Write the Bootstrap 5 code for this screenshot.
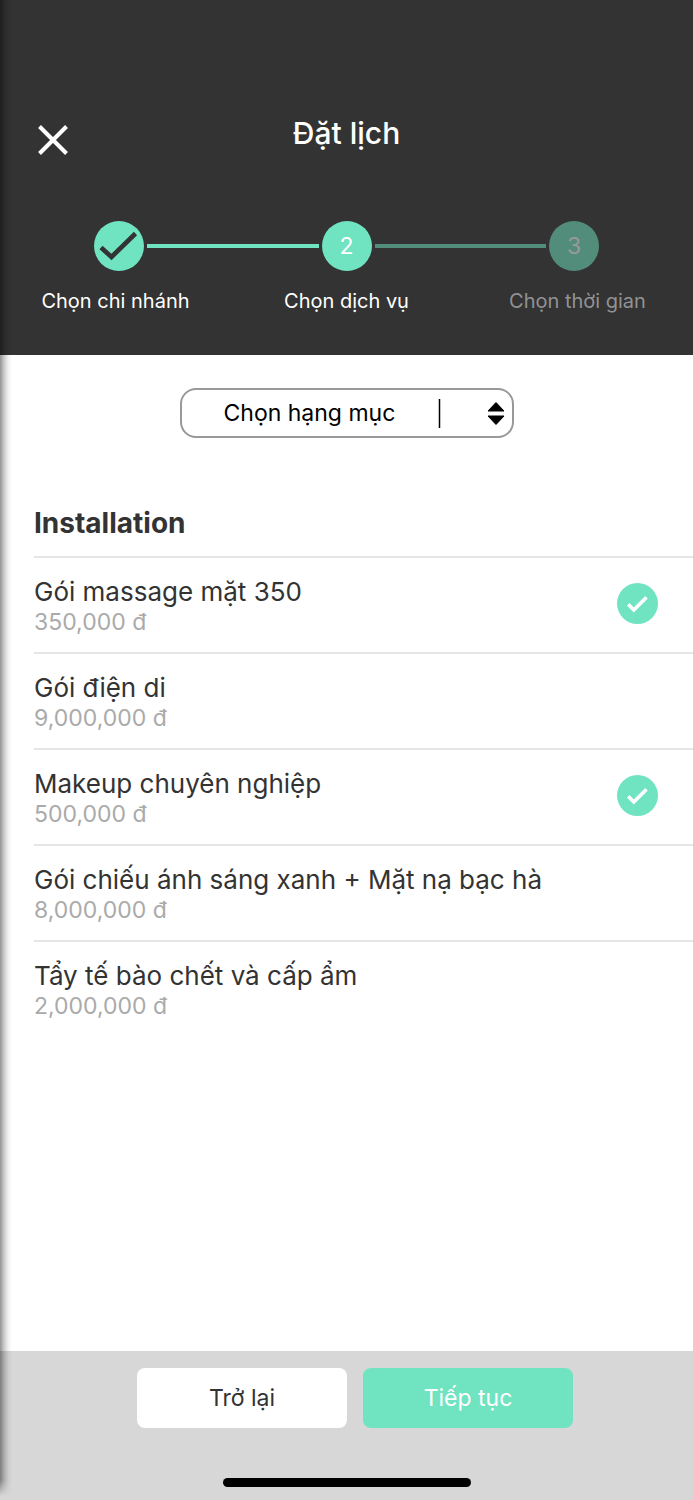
<!DOCTYPE html>
<html lang="vi">
<head>
<meta charset="utf-8">
<meta name="viewport" content="width=device-width, initial-scale=1">
<title>Đặt lịch</title>
<link href="https://cdn.jsdelivr.net/npm/bootstrap@5.3.0/dist/css/bootstrap.min.css" rel="stylesheet">
<style>
:root { --mint: #70e4c1; --ink: #333333; }
body { font-family: Inter, "Liberation Sans", sans-serif; color: var(--ink); background: #fff; }
.edge-shadow { width: 12px; top: 0; bottom: 4px; background: linear-gradient(to right, rgba(0,0,0,.42), rgba(0,0,0,.2) 35%, rgba(0,0,0,.05) 70%, transparent); -webkit-mask-image: linear-gradient(to top, transparent, #000 16px); mask-image: linear-gradient(to top, transparent, #000 16px); }
.booking-head { background: var(--ink); color: #fff; padding: 111px 0 39px; }
.head-bar { display: grid; grid-template-columns: 64px 1fr 64px; padding: 0 21px; margin-bottom: 65px; }
.close-btn { width: 64px; height: 45px; padding: 12px 0 0 16px; line-height: 0; }
.page-title { font-size: 30px; line-height: 45px; font-weight: 500; }
.step-tracks { padding: 0 5px; margin-bottom: 15px; }
.step-track { flex: 1 1 0; gap: 3px; }
.step-line { height: 4px; background: var(--mint); }
.step-dot { width: 50px; height: 50px; background: var(--mint); font-size: 23px; line-height: 50px; text-align: center; }
.step-dot svg { display: block; }
.is-dim { background: #518d7a; color: #999; }
.step-text { flex: 1 1 0; text-align: center; font-size: 20px; line-height: 30px; }
.step-text.is-off { color: #929292; }
.category-box { width: 334px; margin: 33px auto 66px; }
.category-box select { height: 50px; border: 2px solid #999; border-radius: 16px; padding: 0 80px 0 42px; font-size: 23px; color: #000; background: #fff; appearance: none; }
.category-marks { top: 11px; right: 9px; width: 68px; height: 29px; }
.group-title { font-size: 28px; line-height: 38px; font-weight: 700; padding-bottom: 14px; }
.service-list { padding-left: 34px; }
.service-row { height: 96px; border-top: 2px solid #e6e6e6; padding: 0 35px 4px 0; }
.service-text { padding-top: 5px; }
.service-name { font-size: 26px; line-height: 32px; }
.service-price { font-size: 23px; line-height: 28px; color: #aaa; }
.service-check.form-check-input { width: 41px; height: 41px; margin: 0; border: 0; border-radius: 50%; background-color: transparent; flex: none; }
.service-check.form-check-input:checked[type=checkbox] { background-color: var(--mint); background-size: 41px 41px; background-image: url("data:image/svg+xml,%3Csvg xmlns='http://www.w3.org/2000/svg' viewBox='0 0 41 41'%3E%3Cpath d='M11.200 21.300l5.600 5.700 12.700-12.800' fill='none' stroke='white' stroke-width='3.600'/%3E%3C/svg%3E"); }
.booking-foot { background: #d7d7d7; padding: 17px 0 13px; }
.foot-actions { gap: 16px; padding-left: 17px; margin-bottom: 50px; }
.foot-btn { width: 210px; height: 60px; border: 0; border-radius: 8px; font-size: 23px; }
.foot-btn, .foot-btn:hover { background: #fff; color: var(--ink); }
.foot-btn.go-next, .foot-btn.go-next:hover { background: var(--mint); color: #fff; }
.home-bar { width: 248px; height: 9px; background: #000; }
</style>
</head>
<body>
<div class="position-relative d-flex flex-column min-vh-100">
  <header class="booking-head">
    <div class="head-bar">
      <button class="btn border-0 text-start close-btn" type="button" aria-label="Đóng">
        <svg width="32" height="32" viewBox="0 0 32 32"><path d="M2.500 2.500l27 27M29.500 2.500l-27 27" stroke="#fff" stroke-width="4" fill="none"/></svg>
      </button>
      <h1 class="page-title text-center mb-0">Đặt lịch</h1>
    </div>
    <div class="step-tracks d-flex">
      <div class="step-track d-flex align-items-center">
        <span class="flex-fill"></span>
        <span class="step-dot rounded-circle"><svg width="50" height="50" viewBox="0 0 50 50"><path d="M7 26.500L17.500 36 41.500 12.500" stroke="#333" stroke-width="4.600" fill="none"/></svg></span>
        <span class="step-line flex-fill"></span>
      </div>
      <div class="step-track d-flex align-items-center">
        <span class="step-line flex-fill"></span>
        <span class="step-dot rounded-circle">2</span>
        <span class="step-line is-dim flex-fill"></span>
      </div>
      <div class="step-track d-flex align-items-center">
        <span class="step-line is-dim flex-fill"></span>
        <span class="step-dot is-dim rounded-circle">3</span>
        <span class="flex-fill"></span>
      </div>
    </div>
    <div class="d-flex">
      <div class="step-text">Chọn chi nhánh</div>
      <div class="step-text">Chọn dịch vụ</div>
      <div class="step-text is-off">Chọn thời gian</div>
    </div>
  </header>

  <main class="flex-grow-1">
    <div class="category-box position-relative">
      <select class="w-100" aria-label="Chọn hạng mục"><option>Chọn hạng mục</option></select>
      <svg class="category-marks position-absolute pe-none" viewBox="0 0 68 29"><path d="M2.500 0v29" stroke="#000" stroke-width="1.500"/><path d="M51 12l8-8.500 8 8.500zM51 17h16l-8 8.500z" stroke="#000" stroke-width="1" stroke-linejoin="round"/></svg>
    </div>
    <section class="service-list">
      <h2 class="group-title mb-0">Installation</h2>
      <label class="service-row d-flex align-items-center justify-content-between">
        <span class="service-text"><span class="service-name d-block">Gói massage mặt 350</span><span class="service-price d-block">350,000 đ</span></span>
        <input class="form-check-input service-check" type="checkbox" checked>
      </label>
      <label class="service-row d-flex align-items-center justify-content-between">
        <span class="service-text"><span class="service-name d-block">Gói điện di</span><span class="service-price d-block">9,000,000 đ</span></span>
        <input class="form-check-input service-check" type="checkbox">
      </label>
      <label class="service-row d-flex align-items-center justify-content-between">
        <span class="service-text"><span class="service-name d-block">Makeup chuyên nghiệp</span><span class="service-price d-block">500,000 đ</span></span>
        <input class="form-check-input service-check" type="checkbox" checked>
      </label>
      <label class="service-row d-flex align-items-center justify-content-between">
        <span class="service-text"><span class="service-name d-block">Gói chiếu ánh sáng xanh + Mặt nạ bạc hà</span><span class="service-price d-block">8,000,000 đ</span></span>
        <input class="form-check-input service-check" type="checkbox">
      </label>
      <label class="service-row d-flex align-items-center justify-content-between">
        <span class="service-text"><span class="service-name d-block">Tẩy tế bào chết và cấp ẩm</span><span class="service-price d-block">2,000,000 đ</span></span>
        <input class="form-check-input service-check" type="checkbox">
      </label>
    </section>
  </main>

  <footer class="booking-foot">
    <div class="foot-actions d-flex justify-content-center">
      <button class="btn foot-btn" type="button">Trở lại</button>
      <button class="btn foot-btn go-next" type="button">Tiếp tục</button>
    </div>
    <div class="home-bar rounded-pill mx-auto"></div>
  </footer>
  <div class="edge-shadow position-absolute start-0 pe-none"></div>
</div>
<script src="https://cdn.jsdelivr.net/npm/bootstrap@5.3.0/dist/js/bootstrap.bundle.min.js"></script>
</body>
</html>
